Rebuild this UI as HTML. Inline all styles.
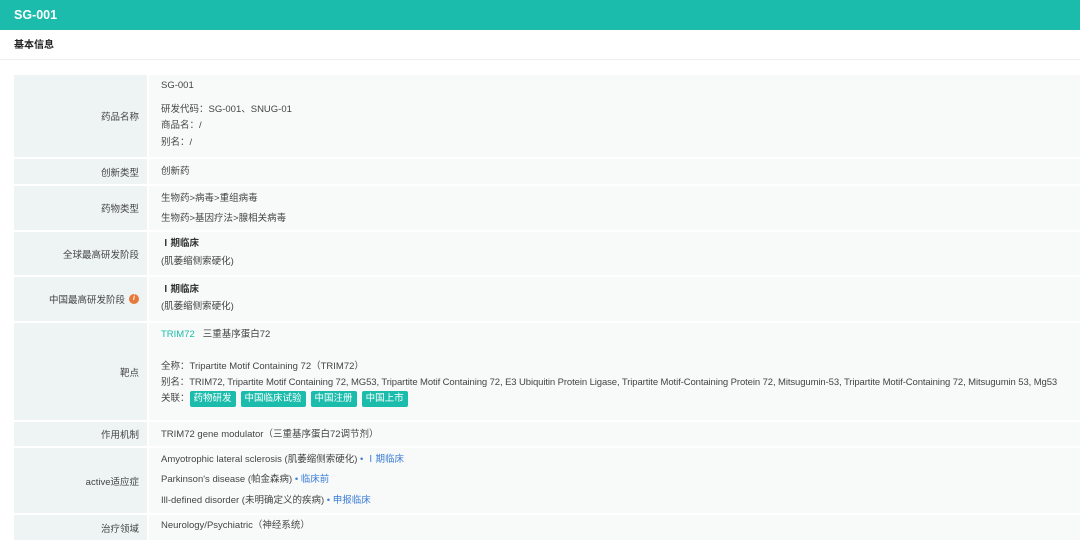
<!DOCTYPE html>
<html><head><meta charset="utf-8"><style>
*{margin:0;padding:0;box-sizing:border-box}
body{width:1080px;height:540px;overflow:hidden;background:#fff;font-family:"Liberation Sans","Noto Sans CJK SC",sans-serif;font-size:9.5px;color:#444;position:relative}
.hd{position:absolute;left:0;top:0;width:1080px;height:30px;background:#1bbcab;color:#fff;font-weight:bold;font-size:12.5px;line-height:31px;padding-left:14px}
.sub{position:absolute;left:0;top:30px;width:1080px;height:30px;border-bottom:1px solid #eef0f0;font-weight:bold;font-size:10px;line-height:31px;padding-left:14px;color:#222}
.row{position:absolute;left:14px;width:1066px}
.lb{position:absolute;left:0;top:0;bottom:0;width:133px;background:#eef4f4;text-align:right;padding-right:8px;display:flex;align-items:center;justify-content:flex-end;color:#444}
.vl{position:absolute;left:135px;top:0;bottom:0;right:0;background:#f8fafa}
.t{position:absolute;white-space:nowrap;line-height:12px}
.tg{display:inline-block;background:#1bbcab;color:#fff;border-radius:2px;padding:0 4px;line-height:16px;margin-right:5px;font-size:9.5px}
.b{color:#3a7bd5}
.ic{display:inline-block;width:10px;height:10px;border-radius:5px;background:#e8793a;color:#fff;font-size:7px;line-height:10px;text-align:center;margin-left:4px;font-style:italic;font-weight:bold}
</style></head><body>
<div class="hd">SG-001</div>
<div class="sub">基本信息</div>

<div class="row" style="top:75px;height:82px"><div class="lb">药品名称</div><div class="vl"></div></div>
<div class="t" style="left:161px;top:80px">SG-001</div>
<div class="t" style="left:161px;top:104px">研发代码：SG-001、SNUG-01</div>
<div class="t" style="left:161px;top:120px">商品名：/</div>
<div class="t" style="left:161px;top:137px">别名：/</div>

<div class="row" style="top:159px;height:25px"><div class="lb">创新类型</div><div class="vl"></div></div>
<div class="t" style="left:161px;top:166px">创新药</div>

<div class="row" style="top:186px;height:44px"><div class="lb">药物类型</div><div class="vl"></div></div>
<div class="t" style="left:161px;top:193px">生物药&gt;病毒&gt;重组病毒</div>
<div class="t" style="left:161px;top:213px">生物药&gt;基因疗法&gt;腺相关病毒</div>

<div class="row" style="top:232px;height:43px"><div class="lb">全球最高研发阶段</div><div class="vl"></div></div>
<div class="t" style="left:161px;top:238px;font-weight:bold;color:#333">Ⅰ期临床</div>
<div class="t" style="left:161px;top:256px">(肌萎缩侧索硬化)</div>

<div class="row" style="top:277px;height:44px"><div class="lb">中国最高研发阶段<span class="ic">i</span></div><div class="vl"></div></div>
<div class="t" style="left:161px;top:284px;font-weight:bold;color:#333">Ⅰ期临床</div>
<div class="t" style="left:161px;top:301px">(肌萎缩侧索硬化)</div>

<div class="row" style="top:323px;height:97px"><div class="lb">靶点</div><div class="vl"></div></div>
<div class="t" style="left:161px;top:329px"><span style="color:#1bbcab">TRIM72</span>&nbsp;&nbsp; 三重基序蛋白72</div>
<div class="t" style="left:161px;top:361px">全称：Tripartite Motif Containing 72（TRIM72）</div>
<div class="t" style="left:161px;top:377px;letter-spacing:-0.1px">别名：TRIM72, Tripartite Motif Containing 72, MG53, Tripartite Motif Containing 72, E3 Ubiquitin Protein Ligase, Tripartite Motif-Containing Protein 72, Mitsugumin-53, Tripartite Motif-Containing 72, Mitsugumin 53, Mg53</div>
<div class="t" style="left:161px;top:391px;line-height:16px">关联：<span class="tg">药物研发</span><span class="tg">中国临床试验</span><span class="tg">中国注册</span><span class="tg">中国上市</span></div>

<div class="row" style="top:422px;height:24px"><div class="lb">作用机制</div><div class="vl"></div></div>
<div class="t" style="left:161px;top:429px">TRIM72 gene modulator（三重基序蛋白72调节剂）</div>

<div class="row" style="top:448px;height:65px"><div class="lb">active适应症</div><div class="vl"></div></div>
<div class="t" style="left:161px;top:454px">Amyotrophic lateral sclerosis (肌萎缩侧索硬化) <span class="b">• Ⅰ期临床</span></div>
<div class="t" style="left:161px;top:474px">Parkinson's disease (帕金森病) <span class="b">• 临床前</span></div>
<div class="t" style="left:161px;top:495px">Ill-defined disorder (未明确定义的疾病) <span class="b">• 申报临床</span></div>

<div class="row" style="top:515px;height:25px"><div class="lb">治疗领域</div><div class="vl"></div></div>
<div class="t" style="left:161px;top:520px">Neurology/Psychiatric（神经系统）</div>
</body></html>
